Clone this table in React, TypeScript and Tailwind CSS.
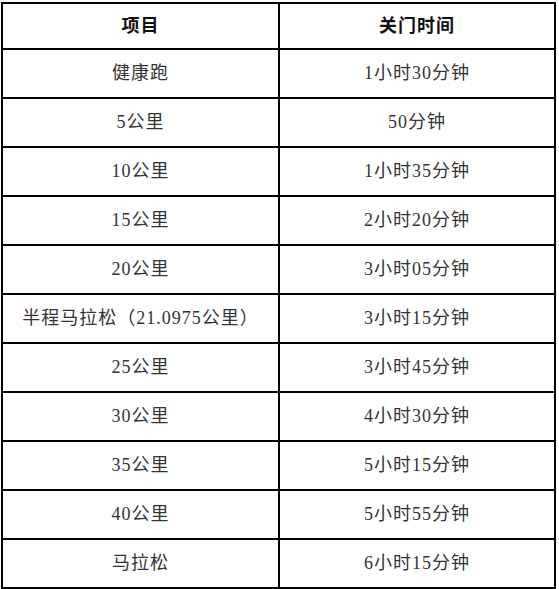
const rows: [string, string][] = [
  ['健康跑', '1小时30分钟'],
  ['5公里', '50分钟'],
  ['10公里', '1小时35分钟'],
  ['15公里', '2小时20分钟'],
  ['20公里', '3小时05分钟'],
  ['半程马拉松（21.0975公里）', '3小时15分钟'],
  ['25公里', '3小时45分钟'],
  ['30公里', '4小时30分钟'],
  ['35公里', '5小时15分钟'],
  ['40公里', '5小时55分钟'],
  ['马拉松', '6小时15分钟'],
];

export default function App() {
  return (
    <div
      className="w-[559px] h-[589px] bg-white pt-[2px] pl-[1px]"
      style={{ fontFamily: '"Liberation Serif", "Noto Sans CJK SC", serif' }}
    >
      <table className="border-collapse w-[555px] table-fixed text-[18px] tracking-[1px] text-[#333]">
        <colgroup>
          <col className="w-[277px]" />
          <col />
        </colgroup>
        <thead>
          <tr className="h-[46px]">
            <th className="border-2 border-black font-bold text-[#111] text-center">项目</th>
            <th className="border-2 border-black font-bold text-[#111] text-center">关门时间</th>
          </tr>
        </thead>
        <tbody>
          {rows.map(([name, time]) => (
            <tr key={name} className="h-[49px]">
              <td className="border-2 border-black text-center whitespace-nowrap">{name}</td>
              <td className="border-2 border-black text-center">{time}</td>
            </tr>
          ))}
        </tbody>
      </table>
    </div>
  );
}
